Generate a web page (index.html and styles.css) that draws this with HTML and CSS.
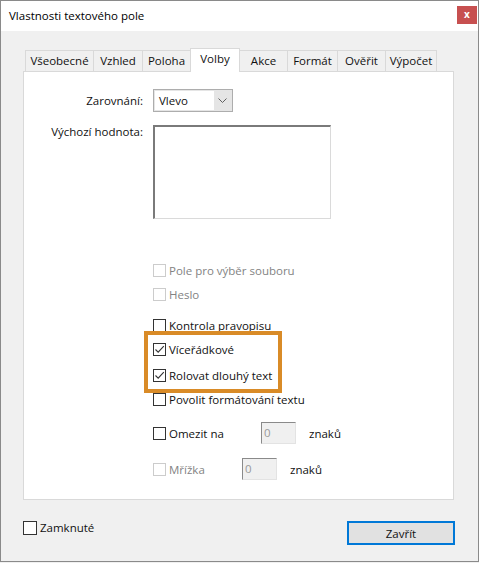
FILE: index.html
```html
<!DOCTYPE html>
<html lang="cs">
<head>
<meta charset="utf-8">
<title>Vlastnosti textového pole</title>
<link rel="stylesheet" href="styles.css">
</head>
<body>
<div class="window">
  <div class="titlebar">
    <span class="title">Vlastnosti textového pole</span>
    <span class="close">x</span>
  </div>
  <div class="content">
    <div class="tabs">
      <div class="tab w68">Všeobecné</div>
      <div class="tab w49">Vzhled</div>
      <div class="tab w48">Poloha</div>
      <div class="tab active w50">Volby</div>
      <div class="tab w47">Akce</div>
      <div class="tab w50">Formát</div>
      <div class="tab w48">Ověřit</div>
      <div class="tab w52">Výpočet</div>
    </div>
    <div class="panel">
      <div class="form-row">
        <div class="label">Zarovnání:</div>
        <div class="select">
          <span class="select-value">Vlevo</span>
          <span class="select-btn">
            <svg width="9" height="5" viewBox="0 0 9 5"><path d="M0.5 0.5 L4.5 4.5 L8.5 0.5" fill="none" stroke="#606060" stroke-width="1"/></svg>
          </span>
        </div>
      </div>
      <div class="form-row top">
        <div class="label label-top">Výchozí hodnota:</div>
        <div class="textarea"></div>
      </div>
      <div class="checks">
        <div class="check disabled first"><span class="box"></span><span>Pole pro výběr souboru</span></div>
        <div class="check disabled"><span class="box"></span><span>Heslo</span></div>
        <div class="check gap7"><span class="box"></span><span>Kontrola pravopisu</span></div>
        <div class="highlight">
          <div class="check"><span class="box"><svg width="13" height="13" viewBox="0 0 13 13"><path d="M2.5 6.5 L5.2 9.2 L10.8 3.2" fill="none" stroke="#333" stroke-width="1.1"/></svg></span><span>Víceřádkové</span></div>
          <div class="check"><span class="box"><svg width="13" height="13" viewBox="0 0 13 13"><path d="M2.5 6.5 L5.2 9.2 L10.8 3.2" fill="none" stroke="#333" stroke-width="1.1"/></svg></span><span>Rolovat dlouhý text</span></div>
        </div>
        <div class="check"><span class="box"></span><span>Povolit formátování textu</span></div>
        <div class="check gap10"><span class="box"></span><span class="lbl-omezit">Omezit na</span><span class="num">0</span><span class="unit">znaků</span></div>
        <div class="check disabled gap12"><span class="box"></span><span class="lbl-mrizka">Mřížka</span><span class="num">0</span><span class="unit unit-on">znaků</span></div>
      </div>
    </div>
    <div class="footer">
      <div class="check footer-check"><span class="box"></span><span>Zamknuté</span></div>
      <button class="btn">Zavřít</button>
    </div>
  </div>
</div>
</body>
</html>
```
FILE: styles.css
```css
* { box-sizing: border-box; }
html, body { margin: 0; padding: 0; background: #f0f0f0; }
body {
  font-family: "Open Sans", "Noto Sans", sans-serif;
  font-size: 11.5px;
  color: #111;
}
.window {
  width: 479px;
  height: 562px;
  border: 1px solid #8a8a8a;
  background: #f0f0f0;
  display: flex;
  flex-direction: column;
}
.titlebar {
  height: 30px;
  background: #fff;
  display: flex;
  align-items: center;
  justify-content: space-between;
  padding-left: 8px;
  padding-right: 1px;
}
.title { font-size: 11.5px; color: #000; margin-top: -2px; }
.close {
  width: 20px;
  height: 18px;
  background: #c75050;
  color: #fff;
  font-weight: bold;
  font-size: 10px;
  display: flex;
  align-items: center;
  justify-content: center;
  margin-top: -3px;
  line-height: 1;
  padding-bottom: 2px;
}
.content {
  padding: 17px 0 0 22px;
}
.tabs {
  display: flex;
  align-items: flex-end;
  padding-left: 2px;
  height: 23px;
  position: relative;
  z-index: 1;
}
.tab {
  height: 21px;
  border: 1px solid #d9d9d9;
  border-right: none;
  border-bottom: none;
  background: #f0f0f0;
  text-align: center;
  line-height: 19px;
  white-space: nowrap;
}
.tab:last-child { border-right: 1px solid #d9d9d9; }
.tab.active + .tab { border-left: none; }
.tab.active {
  height: 24px;
  margin-bottom: -1px;
  background: #fff;
  border-right: 1px solid #d9d9d9;
  line-height: 20px;
}
.w68 { width: 68px; } .w49 { width: 49px; } .w48 { width: 48px; }
.w50 { width: 50px; } .w47 { width: 47px; } .w52 { width: 52px; }
.panel {
  width: 431px;
  height: 429px;
  background: #fff;
  border: 1px solid #d9d9d9;
  padding-top: 17px;
}
.form-row {
  display: flex;
  align-items: center;
  gap: 10px;
}
.form-row.top { align-items: flex-start; margin-top: 13px; }
.label {
  width: 119px;
  text-align: right;
  white-space: nowrap;
}
.label-top { margin-top: -1px; }
.select {
  width: 80px;
  height: 23px;
  border: 1px solid #adadad;
  display: flex;
  background: #e5e5e5;
}
.select-value {
  width: 59px;
  background: #fff;
  padding-left: 4px;
  line-height: 20px;
  margin: 1px 0 1px 1px;
}
.select-btn {
  flex: 1;
  display: flex;
  align-items: center;
  justify-content: center;
  padding-right: 1px;
}
.textarea {
  width: 178px;
  height: 94px;
  background: #fff;
  border-top: 2px solid #7a7a7a;
  border-left: 2px solid #7a7a7a;
  border-right: 1px solid #dadada;
  border-bottom: 1px solid #dadada;
}
.checks {
  padding-left: 129px;
  margin-top: 39px;
  display: flex;
  flex-direction: column;
}
.check {
  height: 24px;
  display: flex;
  align-items: center;
  gap: 3px;
  white-space: nowrap;
}
.box {
  width: 13px;
  height: 13px;
  border: 1px solid #333;
  background: #fff;
  display: flex;
  flex: none;
  position: relative;
}
.box svg { position: absolute; left: -1px; top: -1px; }
.disabled { color: #838383; }
.disabled .box { border-color: #cccccc; }
.gap7 { margin-top: 7px; }
.gap10 { margin-top: 10px; }
.gap12 { margin-top: 12px; }
.highlight {
  width: 138px;
  margin: -6px 0 -6px -9px;
  border: 4px solid #d98b27;
  padding: 2px 0 2px 5px;
  display: flex;
  flex-direction: column;
  gap: 2px;
  position: relative;
}
.lbl-omezit { width: 89px; }
.lbl-mrizka { width: 70px; }
.num {
  width: 35px;
  height: 22px;
  background: #f0f0f0;
  border-top: 1px solid #8a8a8a;
  border-left: 1px solid #8a8a8a;
  border-right: 1px solid #e3e3e3;
  border-bottom: 1px solid #e3e3e3;
  color: #9a9a9a;
  padding-left: 2px;
  line-height: 19px;
}
.unit { margin-left: 10px; color: #111; }
.footer {
  display: flex;
  align-items: center;
  justify-content: space-between;
  width: 432px;
  padding-top: 19px;
}
.footer-check { margin-top: -9px; padding-left: 0; gap: 3px; }
.footer-check .box { width: 14px; height: 14px; }
.btn {
  width: 108px;
  height: 24px;
  background: #e1e1e1;
  border: 2px solid #0078d7;
  font: inherit;
  color: #111;
  padding: 0;
  margin-top: 2px;
}
```
